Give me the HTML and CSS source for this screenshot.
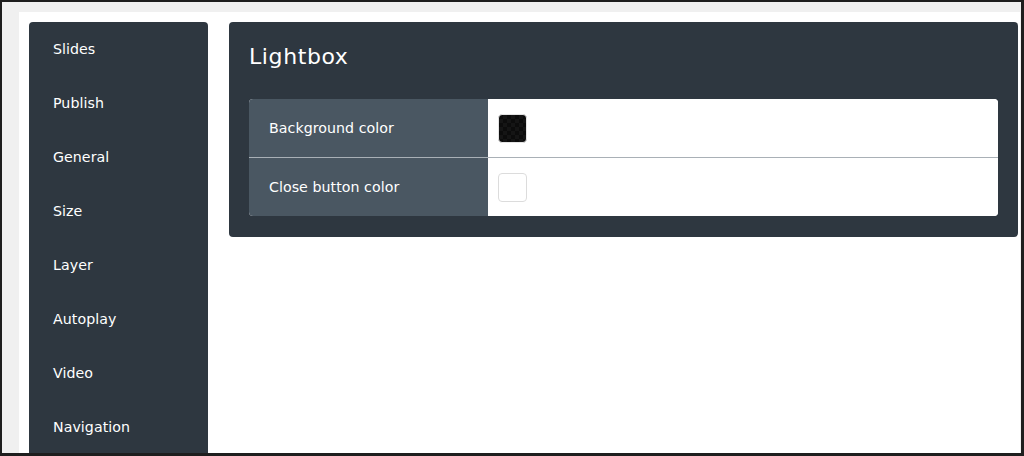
FILE: index.html
```html
<!DOCTYPE html>
<html>
<head>
<meta charset="utf-8">
<link rel="stylesheet" href="styles.css">
</head>
<body>
<div class="frame">
  <div class="sheet">
    <nav class="sidebar">
      <div class="nav-item">Slides</div>
      <div class="nav-item">Publish</div>
      <div class="nav-item">General</div>
      <div class="nav-item">Size</div>
      <div class="nav-item">Layer</div>
      <div class="nav-item">Autoplay</div>
      <div class="nav-item">Video</div>
      <div class="nav-item">Navigation</div>
    </nav>
    <main class="content">
      <section class="panel">
        <h1 class="panel-title">Lightbox</h1>
        <div class="table">
          <div class="row">
            <div class="label">Background color</div>
            <div class="value"><span class="swatch swatch-dark"></span></div>
          </div>
          <div class="row">
            <div class="label">Close button color</div>
            <div class="value"><span class="swatch swatch-light"></span></div>
          </div>
        </div>
      </section>
    </main>
  </div>
</div>
</body>
</html>
```

FILE: styles.css
```css
* { box-sizing: border-box; }
html, body { margin: 0; padding: 0; }
body {
  width: 1024px;
  height: 456px;
  overflow: hidden;
  font-family: "DejaVu Sans", "Noto Sans", sans-serif;
}
.frame {
  width: 1024px;
  height: 456px;
  border: 2px solid #1e1e1e;
  border-right-width: 3px;
  border-bottom-width: 3px;
  background: #f0f0f0;
  padding: 10px 1px 0 17px;
}
.sheet {
  background: #ffffff;
  height: 100%;
  display: flex;
  gap: 21px;
  padding: 10px 2px 0 10px;
  align-items: flex-start;
}
.sidebar {
  width: 179px;
  flex: none;
  background: #2e3740;
  border-radius: 4px 4px 0 0;
  align-self: stretch;
}
.nav-item {
  height: 54px;
  display: flex;
  align-items: center;
  padding-left: 24px;
  color: #ffffff;
  font-size: 14.2px;
  letter-spacing: 0.05px;
}
.content {
  flex: 1;
}
.panel {
  background: #2e3740;
  border-radius: 4px;
  padding: 16px 20px 21px 20px;
}
.panel-title {
  margin: 0 0 24px 0;
  height: 37px;
  line-height: 37px;
  color: #ffffff;
  font-weight: normal;
  font-size: 22px;
  letter-spacing: 0.6px;
}
.table {
  border-radius: 4px;
  overflow: hidden;
  background: #ffffff;
}
.row {
  display: flex;
  height: 58px;
}
.row + .row {
  border-top: 1px solid #a9b0b6;
  height: 59px;
}
.label {
  width: 239px;
  flex: none;
  background: #4a5762;
  color: #ffffff;
  font-size: 14.2px;
  letter-spacing: 0.05px;
  display: flex;
  align-items: center;
  padding-left: 20px;
}
.value {
  flex: 1;
  display: flex;
  align-items: center;
  padding-left: 10px;
  background: #ffffff;
}
.swatch {
  width: 29px;
  height: 29px;
  border-radius: 4px;
  display: block;
}
.swatch-dark {
  background-color: #0c0c0c;
  background-image:
    linear-gradient(45deg, #151515 25%, transparent 25%, transparent 75%, #151515 75%),
    linear-gradient(45deg, #151515 25%, transparent 25%, transparent 75%, #151515 75%);
  background-size: 8px 8px;
  background-position: 0 0, 4px 4px;
  border: 1px solid #e4e4e4;
}
.swatch-light {
  background: #ffffff;
  border: 1.5px solid #dcdcdc;
}
```
